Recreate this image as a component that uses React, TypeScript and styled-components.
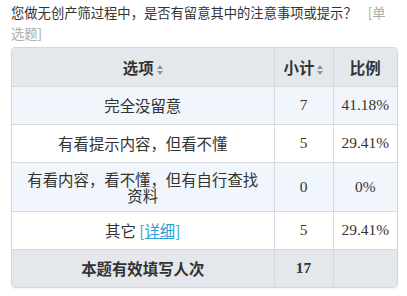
import React from 'react';
import styled, { createGlobalStyle } from 'styled-components';

const GlobalStyle = createGlobalStyle`
  html, body {
    margin: 0;
    padding: 0;
    background: #fff;
  }
  body {
    font-family: "Noto Sans CJK SC", "Noto Sans", sans-serif;
    color: #333;
    text-spacing-trim: space-all;
  }
`;

const Page = styled.div`
  width: 407px;
  height: 296px;
  box-sizing: border-box;
  padding: 2px 11px 0 11px;
`;

const Title = styled.div`
  font-size: 13.3px;
  line-height: 21px;
  color: #333;
`;

const QuestionType = styled.span`
  margin-left: 11px;
  color: #a9a9a9;
`;

const TableFrame = styled.div`
  margin-top: 3px;
  width: 385px;
  border: 1px solid #d3d7dc;
  border-radius: 4px;
  overflow: hidden;
  box-shadow: 0 1px 2px rgba(0, 0, 0, 0.06);
`;

const Table = styled.table`
  width: 100%;
  border-collapse: collapse;
  table-layout: fixed;
`;

const SortSvg = styled.svg`
  margin-left: 3px;
  vertical-align: -1px;
`;

const HeadRow = styled.tr`
  height: 38px;
  background: #e4e7ec;
`;

const HeadCell = styled.th`
  padding: 0 4px;
  font-size: 15.4px;
  font-weight: 700;
  color: #333;
  text-align: center;
  border-left: 1px solid #d5d9de;
  border-bottom: 1px solid #d5d9de;
  &:first-child {
    border-left: none;
  }
`;

const BodyRow = styled.tr<{ $striped: boolean }>`
  height: 38px;
  background: ${({ $striped }) => ($striped ? '#f1f6fc' : '#fff')};
`;

const LabelCell = styled.td`
  padding: 8px;
  font-size: 15.4px;
  line-height: 16px;
  text-align: center;
  color: #333;
  border-bottom: 1px solid #d5d9de;
`;

const NumberCell = styled.td`
  padding: 0 2px;
  font-family: "Liberation Serif", serif;
  font-size: 15.4px;
  text-align: center;
  color: #333;
  border-left: 1px solid #d5d9de;
  border-bottom: 1px solid #d5d9de;
`;

const DetailLink = styled.a`
  color: #2a9fd8;
  text-decoration: underline;
`;

const FootRow = styled.tr`
  height: 38px;
  background: #e4e7ec;
`;

const FootLabel = styled.td`
  font-size: 15.4px;
  font-weight: 700;
  text-align: center;
  color: #333;
`;

const FootNumber = styled.td`
  font-family: "Liberation Serif", serif;
  font-size: 15.4px;
  font-weight: 700;
  text-align: center;
  color: #333;
  border-left: 1px solid #d5d9de;
`;

interface Row {
  label: React.ReactNode;
  count: number;
  percent: string;
}

const rows: Row[] = [
  { label: '完全没留意', count: 7, percent: '41.18%' },
  { label: '有看提示内容，但看不懂', count: 5, percent: '29.41%' },
  { label: '有看内容，看不懂，但有自行查找资料', count: 0, percent: '0%' },
  {
    label: (
      <>
        其它 <DetailLink href="#">[详细]</DetailLink>
      </>
    ),
    count: 5,
    percent: '29.41%'
  }
];

const SortIcon: React.FC = () => (
  <SortSvg width="6" height="10" viewBox="0 0 6 10">
    <path d="M3 0 L6 4 L0 4 Z" fill="#8e939a" />
    <path d="M3 10 L6 6 L0 6 Z" fill="#8e939a" />
  </SortSvg>
);

const App: React.FC = () => {
  return (
    <>
      <GlobalStyle />
      <Page>
        <Title>
          您做无创产筛过程中，是否有留意其中的注意事项或提示？
          <QuestionType>[单选题]</QuestionType>
        </Title>
        <TableFrame>
          <Table>
            <colgroup>
              <col style={{ width: 262 }} />
              <col style={{ width: 59 }} />
              <col />
            </colgroup>
            <thead>
              <HeadRow>
                <HeadCell>
                  选项<SortIcon />
                </HeadCell>
                <HeadCell>
                  小计<SortIcon />
                </HeadCell>
                <HeadCell>比例</HeadCell>
              </HeadRow>
            </thead>
            <tbody>
              {rows.map((row, i) => (
                <BodyRow key={i} $striped={i % 2 === 0}>
                  <LabelCell>{row.label}</LabelCell>
                  <NumberCell>{row.count}</NumberCell>
                  <NumberCell>{row.percent}</NumberCell>
                </BodyRow>
              ))}
              <FootRow>
                <FootLabel>本题有效填写人次</FootLabel>
                <FootNumber>17</FootNumber>
                <FootNumber />
              </FootRow>
            </tbody>
          </Table>
        </TableFrame>
      </Page>
    </>
  );
};

export default App;
